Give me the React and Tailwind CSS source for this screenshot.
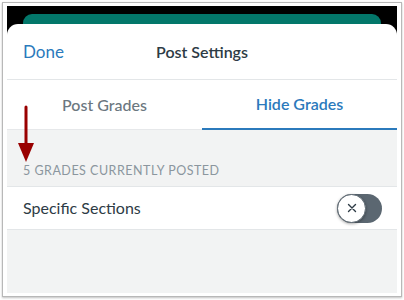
import React from 'react';

const Toggle = () => (
  <div className="relative w-[45px] h-[29px] rounded-full bg-[#5b6771]">
    <div className="absolute left-0 top-0 w-[29px] h-[29px] rounded-full bg-white border border-[#5b6771] shadow-[0_1px_3px_rgba(0,0,0,0.35)] flex items-center justify-center">
      <svg width="10" height="10" viewBox="0 0 10 10">
        <path d="M1.5 1.5 L8.5 8.5 M8.5 1.5 L1.5 8.5" stroke="#2d3b45" strokeWidth="1.4" strokeLinecap="round" />
      </svg>
    </div>
  </div>
);

export default function App() {
  return (
    <div className="w-[404px] h-[300px] bg-white p-[2px] font-['Lato',sans-serif]">
      <div className="relative h-[295px] border border-[#b8b8b8] shadow-[0_1px_2px_rgba(0,0,0,0.25)] px-[4px] pt-[3px] pb-[3px] bg-white">
        <div className="h-full bg-black flex flex-col">
          {/* peek of card behind the sheet */}
          <div className="h-[18px] pt-[8px] px-[16px]">
            <div className="h-full rounded-t-[9px] bg-[#03776a]" />
          </div>

          {/* sheet */}
          <div className="flex-1 flex flex-col rounded-t-[11px] bg-white overflow-hidden">
            <div className="relative h-[56px] flex items-center justify-center border-b border-[#e3e6e8]">
              <span className="absolute left-[16px] text-[17px] text-[#2b7abc]">Done</span>
              <span className="text-[16px] font-semibold text-[#2d3b45]">Post Settings</span>
            </div>

            <div className="flex h-[50px]">
              <div className="flex-1 flex items-center justify-center border-b border-[#e6e8ea] text-[16px] font-medium text-[#6b7780]">
                Post Grades
              </div>
              <div className="flex-1 flex items-center justify-center border-b-2 border-[#2b7abc] text-[16px] font-semibold text-[#2b7abc]">
                Hide Grades
              </div>
            </div>

            <div className="flex-1 bg-[#f2f3f3] flex flex-col">
              <div className="h-[57px] flex items-end pb-[5px] px-[16px] border-b border-[#e3e6e8]">
                <span className="text-[12.5px] tracking-[0.5px] text-[#8b969e]">5 GRADES CURRENTLY POSTED</span>
              </div>
              <div className="h-[43px] bg-white flex items-center justify-between pl-[16px] pr-[15px] border-b border-[#e3e6e8]">
                <span className="text-[16px] text-[#2d3b45]">Specific Sections</span>
                <Toggle />
              </div>
            </div>
          </div>
        </div>

        {/* annotation arrow */}
        <svg className="absolute left-[13px] top-[100px]" width="20" height="62" viewBox="0 0 20 62">
          <line x1="10" y1="4" x2="10" y2="44" stroke="#990000" strokeWidth="3" strokeLinecap="round" />
          <polygon points="2,40 18,40 10,59" fill="#990000" />
        </svg>
      </div>
    </div>
  );
}
